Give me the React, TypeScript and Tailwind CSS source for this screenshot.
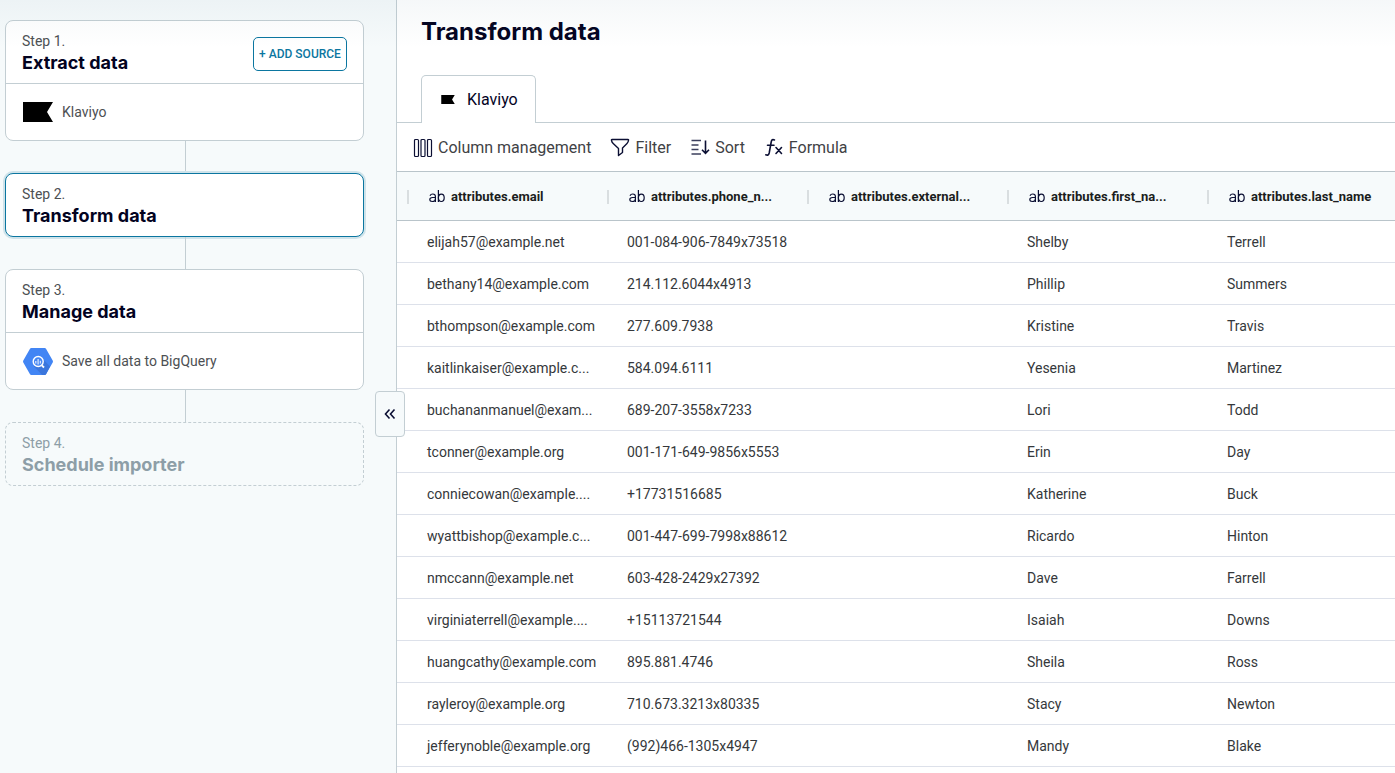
import React from 'react';

interface StepCardProps {
    step: number;
    title: string;
    active?: boolean;
    disabled?: boolean;
    action?: React.ReactNode;
    children?: React.ReactNode;
}

interface Contact {
    email: string;
    phone: string;
    external: string;
    firstName: string;
    lastName: string;
}

const COLUMNS = ['attributes.email', 'attributes.phone_n...', 'attributes.external...', 'attributes.first_na...', 'attributes.last_name'];

const CONTACTS: Contact[] = [
    { email: 'elijah57@example.net', phone: '001-084-906-7849x73518', external: '', firstName: 'Shelby', lastName: 'Terrell' },
    { email: 'bethany14@example.com', phone: '214.112.6044x4913', external: '', firstName: 'Phillip', lastName: 'Summers' },
    { email: 'bthompson@example.com', phone: '277.609.7938', external: '', firstName: 'Kristine', lastName: 'Travis' },
    { email: 'kaitlinkaiser@example.c...', phone: '584.094.6111', external: '', firstName: 'Yesenia', lastName: 'Martinez' },
    { email: 'buchananmanuel@exam...', phone: '689-207-3558x7233', external: '', firstName: 'Lori', lastName: 'Todd' },
    { email: 'tconner@example.org', phone: '001-171-649-9856x5553', external: '', firstName: 'Erin', lastName: 'Day' },
    { email: 'conniecowan@example....', phone: '+17731516685', external: '', firstName: 'Katherine', lastName: 'Buck' },
    { email: 'wyattbishop@example.c...', phone: '001-447-699-7998x88612', external: '', firstName: 'Ricardo', lastName: 'Hinton' },
    { email: 'nmccann@example.net', phone: '603-428-2429x27392', external: '', firstName: 'Dave', lastName: 'Farrell' },
    { email: 'virginiaterrell@example....', phone: '+15113721544', external: '', firstName: 'Isaiah', lastName: 'Downs' },
    { email: 'huangcathy@example.com', phone: '895.881.4746', external: '', firstName: 'Sheila', lastName: 'Ross' },
    { email: 'rayleroy@example.org', phone: '710.673.3213x80335', external: '', firstName: 'Stacy', lastName: 'Newton' },
    { email: 'jefferynoble@example.org', phone: '(992)466-1305x4947', external: '', firstName: 'Mandy', lastName: 'Blake' },
];

const KlaviyoIcon: React.FC<{ className?: string }> = ({ className }) => (
    <svg viewBox="0 0 30 20" className={className} fill="#000" aria-hidden="true">
        <path d="M0 0h30l-6 10 6 10H0z" />
    </svg>
);

const BigQueryIcon: React.FC = () => (
    <svg viewBox="0 0 30 27" className="w-[30px] h-[27px]" aria-hidden="true">
        <path d="M8.3 0h13.4q.9 0 1.3.8l6.7 11.7q.5 1 0 2L23 26.2q-.4.8-1.3.8H8.3q-.9 0-1.3-.8L.3 14.500q-.5-1 0-2L7 .8Q7.4 0 8.3 0z" fill="#4285f4" />
        <path d="M19 10l8 8.5-4 7.7q-.4.8-1.3.8h-2.500L11 18.500z" fill="#3b76dc" />
        <circle cx="15.200" cy="13.500" r="5" fill="#4285f4" stroke="#fff" strokeWidth="1.4" />
        <path d="M18.800 17.3l2.200 2.200" stroke="#fff" strokeWidth="1.8" />
        <path d="M12.800 13v2.500M15.100 11v5.500M17.400 12.700v2.800" stroke="#d5e3fc" strokeWidth="1.3" />
    </svg>
);

const ColumnsIcon: React.FC = () => (
    <svg viewBox="0 0 20 20" className="size-5" fill="none" stroke="#0b0f33" strokeWidth="1.2" aria-hidden="true">
        <rect x="1.5" y="1.5" width="4" height="17" rx="1" />
        <rect x="8" y="1.5" width="4" height="17" rx="1" />
        <rect x="14.5" y="1.5" width="4" height="17" rx="1" />
    </svg>
);

const FilterIcon: React.FC = () => (
    <svg viewBox="0 0 20 20" className="size-5" fill="none" stroke="#0b0f33" strokeWidth="1.4" strokeLinejoin="round" aria-hidden="true">
        <path d="M2 1.500h16q.7 0 .5.8-.2 2-1.500 3.200L12.500 10v4.500L8.500 17.500V10.500L3.200 5.500Q1.800 4.200 1.500 2.300q-.2-.8.5-.8z" />
    </svg>
);

const SortIcon: React.FC = () => (
    <svg viewBox="0 0 20 20" className="size-5" fill="none" stroke="#0b0f33" strokeWidth="1.6" aria-hidden="true">
        <path d="M1.500 2.500h9.500M1.500 7h7M1.500 11.500h7M1.500 16h9.500" stroke="#3b3f5c" strokeWidth="1.3" />
        <path d="M15.500 2.500v12.500M12 11.800l3.500 3.500 3.500-3.500" />
    </svg>
);

const FormulaIcon: React.FC = () => (
    <svg viewBox="0 0 20 20" className="size-5" fill="none" stroke="#0b0f33" strokeWidth="1.6" strokeLinecap="round" aria-hidden="true">
        <path d="M10.500 2Q7.800.6 7.200 4L5.200 15Q4.500 18 1.800 16.800M3.500 7.200H10M12 9.500l5.500 6M17.500 9.500l-5.500 6" />
    </svg>
);

const TextTypeIcon: React.FC = () => (
    <svg viewBox="0 0 16 14" className="w-4 h-3.5 shrink-0" fill="none" stroke="#0b0f33" strokeWidth="1.2" aria-hidden="true">
        <path d="M1 5.8Q1.8 4 3.8 4 6.400 4 6.400 6.400V12M6.400 7.500H3.500Q.8 7.700.8 9.600.8 11.500 3.200 11.500 6.400 11.500 6.400 9" />
        <path d="M9.400 0V12" />
        <ellipse cx="12.300" cy="7.800" rx="2.900" ry="3.700" />
    </svg>
);

const StepCard: React.FC<StepCardProps> = ({ step, title, active, disabled, action, children }) => {
    let frame = 'border-[#c3ced3] bg-white';
    if (active) frame = 'border-[#0b76a0] bg-white ring-2 ring-[#cfe3ea]';
    if (disabled) frame = 'border-dashed border-[#c3ced3]';

    return (
        <section className={`rounded-lg border ${frame}`}>
            <div className="flex h-[62px] items-start justify-between px-4 pt-2.5">
                <div>
                    <p className={`text-sm leading-5 ${disabled ? 'text-[#8d9ea7]' : 'text-[#4d5053]'}`}>Step {step}.</p>
                    <h2 className={`font-['Inter',sans-serif] text-lg leading-6 font-bold ${disabled ? 'text-[#8d9ea7]' : 'text-[#03031f]'}`}>{title}</h2>
                </div>
                {action && <div className="pt-1.5">{action}</div>}
            </div>
            {children && (
                <div className="flex h-[57px] items-center gap-[9px] border-t border-[#c3ced3] px-[17px] text-sm text-[#4d5053]">{children}</div>
            )}
        </section>
    );
};

const Connector: React.FC = () => <div className="ml-[180px] h-8 w-px bg-[#c3ced3]" />;

const ToolbarButton: React.FC<{ icon: React.ReactNode; label: string }> = ({ icon, label }) => (
    <button type="button" className="flex items-center gap-[5px] text-base text-[#3f4245]">
        {icon}
        {label}
    </button>
);

const Sidebar: React.FC = () => (
    <aside className="relative w-[397px] shrink-0 border-r border-[#c3ced3] bg-[#f6fafb] pt-5 pr-8 pl-[5px]">
        <StepCard
            step={1}
            title="Extract data"
            action={
                <button type="button" className="h-[34px] w-[94px] rounded-[5px] border border-[#0b76a0] bg-white text-xs font-medium whitespace-nowrap text-[#0b76a0]">
                    + ADD SOURCE
                </button>
            }
        >
            <KlaviyoIcon className="h-5 w-[30px]" />
            <span>Klaviyo</span>
        </StepCard>
        <Connector />
        <StepCard step={2} title="Transform data" active />
        <Connector />
        <StepCard step={3} title="Manage data">
            <BigQueryIcon />
            <span>Save all data to BigQuery</span>
        </StepCard>
        <Connector />
        <StepCard step={4} title="Schedule importer" disabled />

        <button
            type="button"
            aria-label="Collapse steps"
            className="absolute top-[391px] -right-[9px] z-10 flex h-[46px] w-[30px] items-center justify-center rounded-[4px] border border-[#c3ced3] bg-[#f6fafb]"
        >
            <svg viewBox="0 0 12 12" className="size-3" fill="none" stroke="#0b0f33" strokeWidth="1.6" aria-hidden="true">
                <path d="M5.500 1.500L1.500 6l4 4.500M10.500 1.500L6.500 6l4 4.500" />
            </svg>
        </button>
    </aside>
);

const DataTable: React.FC = () => (
    <table className="w-full min-w-[1000px] table-fixed border-separate border-spacing-0 text-left">
        <thead>
            <tr className="bg-[#f6fafb]">
                {COLUMNS.map(column => (
                    <th key={column} className="h-[50px] border-y border-[#b9c4ca] p-0 pl-2.5 first:w-[200px] nth-2:w-[200px] nth-3:w-[200px] nth-4:w-[200px]">
                        <div className="flex items-center pt-px text-[13px] font-bold whitespace-nowrap text-[#1b1d20]">
                            <span className="mr-5 h-3.5 w-0.5 bg-[#d9dee0]" />
                            <TextTypeIcon />
                            <span className="ml-1.5">{column}</span>
                        </div>
                    </th>
                ))}
            </tr>
        </thead>
        <tbody className="text-sm text-[#35383b]">
            {CONTACTS.map(contact => (
                <tr key={contact.email}>
                    {[contact.email, contact.phone, contact.external, contact.firstName, contact.lastName].map((value, index) => (
                        <td key={index} className="h-[42px] border-b border-[#dde1ea] p-0 pl-[30px] whitespace-nowrap">{value}</td>
                    ))}
                </tr>
            ))}
        </tbody>
    </table>
);

export default function App() {
    return (
        <div className="relative flex h-screen overflow-hidden bg-white font-['Roboto',sans-serif]">
            <Sidebar />
            <main className="min-w-0 flex-1 overflow-hidden">
                <h1 className="px-6 pt-4 pb-[27px] font-['Inter',sans-serif] text-2xl leading-8 font-bold text-[#03031f]">Transform data</h1>
                <div role="tablist" className="flex border-b border-[#c3ced3] px-6">
                    <button
                        type="button"
                        role="tab"
                        aria-selected="true"
                        className="-mb-px flex h-12 items-center gap-3 rounded-t-[5px] border border-b-0 border-[#c3ced3] bg-white px-[17px] pl-[19px] text-base text-[#03031f]"
                    >
                        <KlaviyoIcon className="h-[9px] w-3.5" />
                        Klaviyo
                    </button>
                </div>
                <div className="flex h-12 items-center gap-[19px] px-4 pt-0.5">
                    <ToolbarButton icon={<ColumnsIcon />} label="Column management" />
                    <ToolbarButton icon={<FilterIcon />} label="Filter" />
                    <ToolbarButton icon={<SortIcon />} label="Sort" />
                    <ToolbarButton icon={<FormulaIcon />} label="Formula" />
                </div>
                <DataTable />
            </main>
            {/* soft shade under the page's top edge */}
            <div className="pointer-events-none absolute inset-x-0 top-0 h-12 bg-linear-to-b from-[#5a82960f] to-transparent" />
        </div>
    );
}
